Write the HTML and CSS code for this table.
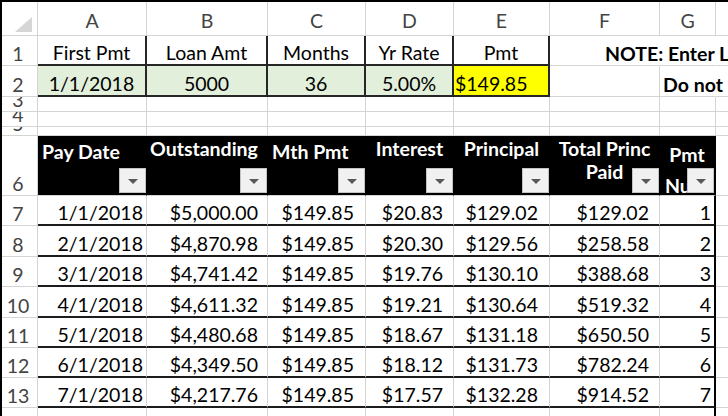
FILE: index.html
```html
<!DOCTYPE html>
<html lang="en">
<head>
<meta charset="utf-8">
<title>Loan Amortization</title>
<link rel="stylesheet" href="styles.css">
</head>
<body>
<div class="sheet">
  <div class="row r-hdr">
    <div class="c corner"><svg width="35" height="33" viewBox="0 0 35 33"><polygon points="30,15 30,30 13,30" fill="#d6d6d6"/></svg></div>
    <div class="c ch">A</div>
    <div class="c ch">B</div>
    <div class="c ch">C</div>
    <div class="c ch">D</div>
    <div class="c ch">E</div>
    <div class="c ch">F</div>
    <div class="c ch">G</div>
    <div class="c ch">H</div>
  </div>
  <div class="row r1">
    <div class="c rh">1</div>
    <div class="c box">First Pmt</div>
    <div class="c box">Loan Amt</div>
    <div class="c box">Months</div>
    <div class="c box">Yr Rate</div>
    <div class="c box">Pmt</div>
    <div class="c note nob"><b>NOTE: Enter Loan info in green cells</b></div>
    <div class="c nob"></div>
    <div class="c"></div>
  </div>
  <div class="row r2">
    <div class="c rh">2</div>
    <div class="c box green">1/1/2018</div>
    <div class="c box green">5000</div>
    <div class="c box green">36</div>
    <div class="c box green">5.00%</div>
    <div class="c box yellow">$149.85</div>
    <div class="c"></div>
    <div class="c note2 nob"><b>Do not change formulas</b></div>
    <div class="c"></div>
  </div>
  <div class="row r3">
    <div class="c rh">3</div>
    <div class="c"></div><div class="c"></div><div class="c"></div><div class="c"></div><div class="c"></div><div class="c"></div><div class="c"></div><div class="c"></div>
  </div>
  <div class="row r4">
    <div class="c rh">4</div>
    <div class="c"></div><div class="c"></div><div class="c"></div><div class="c"></div><div class="c"></div><div class="c"></div><div class="c"></div><div class="c"></div>
  </div>
  <div class="row r5">
    <div class="c rh">5</div>
    <div class="c"></div><div class="c"></div><div class="c"></div><div class="c"></div><div class="c"></div><div class="c"></div><div class="c"></div><div class="c"></div>
  </div>
  <div class="row r6">
    <div class="c rh">6</div>
    <div class="c th th-a"><div class="tt">Pay Date</div><span class="fb"><i></i></span></div>
    <div class="c th th-b"><div class="tt">Outstanding</div><span class="fb"><i></i></span></div>
    <div class="c th th-c"><div class="tt">Mth Pmt</div><span class="fb"><i></i></span></div>
    <div class="c th th-d"><div class="tt">Interest</div><span class="fb"><i></i></span></div>
    <div class="c th th-e"><div class="tt">Principal</div><span class="fb"><i></i></span></div>
    <div class="c th th-f"><div class="tt">Total Princ<br>Paid</div><span class="fb"><i></i></span></div>
    <div class="c th th-g last"><div class="tt">Pmt</div><div class="tt2">Number</div><span class="fb"><i></i></span></div>
    <div class="c"></div>
  </div>

  <div class="row rd r7">
    <div class="c rh">7</div>
    <div class="c td pa">1/1/2018</div><div class="c td pb">$5,000.00</div><div class="c td pc">$149.85</div><div class="c td pd">$20.83</div><div class="c td pe">$129.02</div><div class="c td pf">$129.02</div><div class="c td pg last">1</div><div class="c"></div>
  </div>
  <div class="row rd r8">
    <div class="c rh">8</div>
    <div class="c td pa">2/1/2018</div><div class="c td pb">$4,870.98</div><div class="c td pc">$149.85</div><div class="c td pd">$20.30</div><div class="c td pe">$129.56</div><div class="c td pf">$258.58</div><div class="c td pg last">2</div><div class="c"></div>
  </div>
  <div class="row rd r9">
    <div class="c rh">9</div>
    <div class="c td pa">3/1/2018</div><div class="c td pb">$4,741.42</div><div class="c td pc">$149.85</div><div class="c td pd">$19.76</div><div class="c td pe">$130.10</div><div class="c td pf">$388.68</div><div class="c td pg last">3</div><div class="c"></div>
  </div>
  <div class="row rd r10">
    <div class="c rh">10</div>
    <div class="c td pa">4/1/2018</div><div class="c td pb">$4,611.32</div><div class="c td pc">$149.85</div><div class="c td pd">$19.21</div><div class="c td pe">$130.64</div><div class="c td pf">$519.32</div><div class="c td pg last">4</div><div class="c"></div>
  </div>
  <div class="row rd r11">
    <div class="c rh">11</div>
    <div class="c td pa">5/1/2018</div><div class="c td pb">$4,480.68</div><div class="c td pc">$149.85</div><div class="c td pd">$18.67</div><div class="c td pe">$131.18</div><div class="c td pf">$650.50</div><div class="c td pg last">5</div><div class="c"></div>
  </div>
  <div class="row rd r12">
    <div class="c rh">12</div>
    <div class="c td pa">6/1/2018</div><div class="c td pb">$4,349.50</div><div class="c td pc">$149.85</div><div class="c td pd">$18.12</div><div class="c td pe">$131.73</div><div class="c td pf">$782.24</div><div class="c td pg last">6</div><div class="c"></div>
  </div>
  <div class="row rd r13">
    <div class="c rh">13</div>
    <div class="c td pa">7/1/2018</div><div class="c td pb">$4,217.76</div><div class="c td pc">$149.85</div><div class="c td pd">$17.57</div><div class="c td pe">$132.28</div><div class="c td pf">$914.52</div><div class="c td pg last">7</div><div class="c"></div>
  </div>
  <div class="row rd r14">
    <div class="c rh">14</div>
    <div class="c td pa">8/1/2018</div><div class="c td pb">$4,085.48</div><div class="c td pc">$149.85</div><div class="c td pd">$17.02</div><div class="c td pe">$132.83</div><div class="c td pf">$1,047.35</div><div class="c td pg last">8</div><div class="c"></div>
  </div>
</div>
</body>
</html>
```

FILE: styles.css
```css
html, body {
  margin: 0;
  padding: 0;
  background: #ffffff;
  overflow: hidden;
}

body {
  font-family: Lato, "Open Sans", "Liberation Sans", sans-serif;
  color: #000;
}

.sheet {
  width: 726px;
  height: 414px;
  border-top: 2px solid #000;
  border-left: 2px solid #000;
  overflow: hidden;
}

.row {
  display: grid;
  grid-template-columns: 36px 109px 121px 98px 88px 96px 110px 56px 40px;
}

.r-hdr { height: 34px; }
.r1 { height: 30px; }
.r2 { height: 31px; }
.r3 { height: 15px; }
.r4 { height: 15px; }
.r5 { height: 9px; }
.r6 { height: 60px; }
.r7 { height: 30px; }
.r8 { height: 31px; }
.r9 { height: 30px; }
.r10 { height: 31px; }
.r11 { height: 30px; }
.r12 { height: 30px; }
.r13 { height: 30px; }
.r14 { height: 30px; }

.c {
  box-sizing: border-box;
  border-right: 1px solid #d4d4d4;
  border-bottom: 1px solid #d4d4d4;
  display: flex;
  align-items: flex-end;
  justify-content: center;
  font-size: 19.5px;
  line-height: 22px;
  overflow: hidden;
  white-space: nowrap;
  min-width: 0;
}

.corner {
  padding: 0;
  align-items: flex-start;
  justify-content: flex-start;
}

.corner svg { display: block; }

.ch {
  color: #444;
  padding-bottom: 3px;
}

.rh {
  color: #444;
  padding-right: 3px;
}

/* Input box A1:E2 */
.box {
  border-right: 2px solid #262626;
  border-bottom: 2px solid #262626;
}

.green { background: #e2efda; }
.yellow {
  background: #ffff00;
  justify-content: flex-start;
  padding-left: 1px;
}

.nob { border-right-color: transparent; }

.note {
  overflow: visible;
  justify-content: flex-start;
  padding-left: 55px;
  position: relative;
  z-index: 1;
}

.note2 {
  overflow: visible;
  justify-content: flex-start;
  padding-left: 3px;
  position: relative;
  z-index: 1;
}

/* Table header row */
.th {
  display: block;
  position: relative;
  background: #000;
  border-right-color: #000;
  color: #fff;
  font-weight: 700;
  line-height: 23px;
}

.th-a .tt { padding: 4px 0 0 4px; text-align: left; }
.th-b .tt { padding: 1px 0 0 3px; text-align: left; }
.th-c .tt { padding: 4px 0 0 4px; text-align: left; }
.th-d .tt,
.th-e .tt,
.th-f .tt { padding-top: 1px; text-align: center; }
.th-g .tt { padding-top: 7px; text-align: center; }
.th-g .tt2 { margin-top: 8px; padding-left: 5px; text-align: left; }

.last { border-right: 2px solid #000; }

.fb {
  position: absolute;
  right: 0;
  bottom: 2px;
  width: 27px;
  height: 25px;
  box-sizing: border-box;
  background: #f1f1f1;
  border: 1px solid #c4c4c4;
  display: flex;
  align-items: center;
  justify-content: center;
}

.fb i {
  display: block;
  width: 0;
  height: 0;
  margin-top: 2px;
  border-left: 5px solid transparent;
  border-right: 5px solid transparent;
  border-top: 5px solid #595959;
}

/* Data rows */
.td {
  justify-content: flex-end;
  border-bottom: 2px solid #1c1c1c;
}

.pa { padding-right: 3px; }
.pb { padding-right: 9px; }
.pc { padding-right: 11px; }
.pd { padding-right: 10px; }
.pe { padding-right: 11px; }
.pf { padding-right: 10px; }
.pg { padding-right: 3px; }
```
